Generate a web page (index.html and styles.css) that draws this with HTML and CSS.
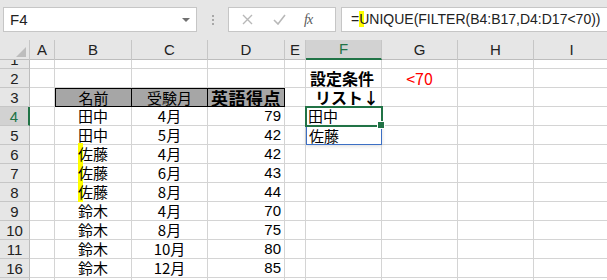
FILE: index.html
```html
<!DOCTYPE html>
<html lang="ja">
<head>
    <meta charset="UTF-8">
    <title>Sheet</title>
    <link rel="stylesheet" href="styles.css">
</head>
<body>
    <div class="fbar">
        <div class="namebox">
            <span>F4</span>
            <span class="drop"></span>
        </div>
        <div class="dots"><i></i><i></i><i></i></div>
        <div class="btns">
            <span class="icon">
                <svg width="11" height="11" viewBox="0 0 11 11"><path d="M1 1L10 10M10 1L1 10" stroke="#b8b8b8" stroke-width="1.4" fill="none"/></svg>
            </span>
            <span class="icon">
                <svg width="13" height="11" viewBox="0 0 13 11"><path d="M1 6L5 10L12 1" stroke="#b8b8b8" stroke-width="1.6" fill="none"/></svg>
            </span>
            <span class="icon fx">fx</span>
        </div>
        <div class="formula"><span>=</span><span class="hl">U</span><span>NIQUE(FILTER(B4:B17,D4:D17&lt;70))</span></div>
    </div>

    <div class="heads">
        <div class="corner"><span></span></div>
        <div class="ch">A</div>
        <div class="ch">B</div>
        <div class="ch">C</div>
        <div class="ch">D</div>
        <div class="ch">E</div>
        <div class="ch sel">F</div>
        <div class="ch">G</div>
        <div class="ch">H</div>
        <div class="ch">I</div>
    </div>

    <div class="sheet">
        <div class="grid">
            <div class="rh">1</div><div class="c"></div><div class="c"></div><div class="c"></div><div class="c"></div><div class="c"></div><div class="c"></div><div class="c"></div><div class="c"></div><div class="c"></div>

            <div class="rh">2</div><div class="c"></div><div class="c"></div><div class="c"></div><div class="c"></div><div class="c"></div><div class="c bold cond">設定条件</div><div class="c mid red">&lt;70</div><div class="c"></div><div class="c"></div>

            <div class="rh">3</div><div class="c"></div><div class="c th th-first">名前</div><div class="c th">受験月</div><div class="c th bold big">英語得点</div><div class="c"></div><div class="c bold list">リスト↓</div><div class="c"></div><div class="c"></div><div class="c"></div>

            <div class="rh cur">4</div><div class="c"></div><div class="c mid">田中</div><div class="c mid">4月</div><div class="c num">79</div><div class="c"></div><div class="c active">田中</div><div class="c"></div><div class="c"></div><div class="c"></div>

            <div class="rh">5</div><div class="c"></div><div class="c mid">田中</div><div class="c mid">5月</div><div class="c num">42</div><div class="c"></div><div class="c spill">佐藤</div><div class="c"></div><div class="c"></div><div class="c"></div>

            <div class="rh">6</div><div class="c"></div><div class="c mid"><span class="hl">佐</span>藤</div><div class="c mid">4月</div><div class="c num">42</div><div class="c"></div><div class="c"></div><div class="c"></div><div class="c"></div><div class="c"></div>

            <div class="rh">7</div><div class="c"></div><div class="c mid"><span class="hl">佐</span>藤</div><div class="c mid">6月</div><div class="c num">43</div><div class="c"></div><div class="c"></div><div class="c"></div><div class="c"></div><div class="c"></div>

            <div class="rh">8</div><div class="c"></div><div class="c mid"><span class="hl">佐</span>藤</div><div class="c mid">8月</div><div class="c num">44</div><div class="c"></div><div class="c"></div><div class="c"></div><div class="c"></div><div class="c"></div>

            <div class="rh">9</div><div class="c"></div><div class="c mid">鈴木</div><div class="c mid">4月</div><div class="c num">70</div><div class="c"></div><div class="c"></div><div class="c"></div><div class="c"></div><div class="c"></div>

            <div class="rh">10</div><div class="c"></div><div class="c mid">鈴木</div><div class="c mid">8月</div><div class="c num">75</div><div class="c"></div><div class="c"></div><div class="c"></div><div class="c"></div><div class="c"></div>

            <div class="rh">11</div><div class="c"></div><div class="c mid">鈴木</div><div class="c mid">10月</div><div class="c num">80</div><div class="c"></div><div class="c"></div><div class="c"></div><div class="c"></div><div class="c"></div>

            <div class="rh">16</div><div class="c"></div><div class="c mid">鈴木</div><div class="c mid">12月</div><div class="c num">85</div><div class="c"></div><div class="c"></div><div class="c"></div><div class="c"></div><div class="c"></div>

            <div class="rh"></div><div class="c"></div><div class="c"></div><div class="c"></div><div class="c"></div><div class="c"></div><div class="c"></div><div class="c"></div><div class="c"></div><div class="c"></div>
        </div>
    </div>
</body>
</html>
```

FILE: styles.css
```css
*{
    margin: 0;
    padding: 0;
    box-sizing: border-box;
}
body{
    width: 607px;
    height: 280px;
    overflow: hidden;
    background-color: white;
    font-family: "Liberation Sans", "Noto Sans CJK JP", sans-serif;
}

/* formula bar */
.fbar{
    height: 40px;
    background-color: #e6e6e6;
    display: flex;
    align-items: flex-start;
    padding: 7px 0 0 3px;
}
.namebox{
    width: 194px;
    height: 25px;
    background-color: white;
    border: 1px solid #c6c6c6;
    display: flex;
    align-items: center;
    justify-content: space-between;
    padding: 0 6px 0 6px;
    font-size: 15px;
    color: #222;
}
.drop{
    width: 0;
    height: 0;
    border-left: 4px solid transparent;
    border-right: 4px solid transparent;
    border-top: 4px solid #707070;
}
.dots{
    width: 31px;
    height: 25px;
    display: flex;
    flex-direction: column;
    align-items: center;
    justify-content: center;
    gap: 2px;
}
.dots i{
    width: 2px;
    height: 2px;
    background-color: #a8a8a8;
}
.btns{
    width: 108px;
    height: 25px;
    background-color: white;
    border: 1px solid #c6c6c6;
    display: flex;
    align-items: center;
    padding-left: 13px;
}
.icon{
    width: 36px;
    display: flex;
    align-items: center;
}
.fx{
    font-family: "Liberation Serif", serif;
    font-style: italic;
    font-size: 14px;
    color: #5a5a5a;
    letter-spacing: -1px;
}
.formula{
    flex: 1;
    height: 25px;
    margin-left: 5px;
    background-color: white;
    border: 1px solid #c6c6c6;
    border-right: none;
    padding-left: 9px;
    font-size: 14px;
    line-height: 23px;
    color: #222;
    white-space: nowrap;
    overflow: hidden;
}
.hl{
    background: linear-gradient(to right, #ffff00 5px, transparent 5px);
}

/* column headers */
.heads{
    display: grid;
    grid-template-columns: 30px 25px 77px 76px 77px 21px 76px 76px 76px 76px;
    height: 20px;
    background-color: #e6e6e6;
    border-bottom: 1px solid #bdbdbd;
}
.corner{
    border-right: 1px solid #c6c6c6;
    position: relative;
}
.corner span{
    position: absolute;
    right: 3px;
    bottom: 3px;
    width: 0;
    height: 0;
    border-left: 10px solid transparent;
    border-bottom: 10px solid #bdbdbd;
}
.ch{
    border-right: 1px solid #c6c6c6;
    text-align: center;
    font-size: 15px;
    line-height: 19px;
    color: #222;
}
.ch.sel{
    background-color: #d2d2d2;
    border-bottom: 2px solid #217346;
    color: #217346;
    line-height: 18px;
}

/* sheet */
.sheet{
    height: 220px;
    overflow: hidden;
}
.grid{
    display: grid;
    grid-template-columns: 30px 25px 77px 76px 77px 21px 76px 76px 76px 76px;
    grid-auto-rows: 19px;
    margin-top: -10px;
}
.rh{
    background-color: #e6e6e6;
    border-right: 1px solid #bdbdbd;
    border-bottom: 1px solid #c6c6c6;
    text-align: center;
    font-size: 15px;
    line-height: 19px;
    color: #222;
}
.rh.cur{
    background-color: #d2d2d2;
    border-right: 2px solid #217346;
    color: #217346;
}
.c{
    border-right: 1px solid #d4d4d4;
    border-bottom: 1px solid #d4d4d4;
    font-family: "Noto Sans CJK JP", "Liberation Sans", sans-serif;
    font-size: 15px;
    line-height: 18px;
    padding: 0 2px;
    color: black;
    white-space: nowrap;
}
.mid{
    text-align: center;
}
.num{
    text-align: right;
    padding-right: 3px;
    font-family: "Liberation Sans", sans-serif;
}
.bold{
    font-weight: bold;
}
.big{
    font-size: 17px;
    letter-spacing: 0.5px;
    padding: 0;
    text-align: center;
}
.red{
    color: #ff0000;
    font-size: 16px;
}
.cond{
    font-size: 16px;
    padding-left: 4px;
}
.list{
    font-size: 16px;
    padding-left: 9px;
}
.th{
    background-color: #a6a6a6;
    border-top: 1px solid black;
    border-right: 1px solid black;
    border-bottom: 1px solid black;
    text-align: center;
    line-height: 17px;
}
.th-first{
    border-left: 1px solid black;
}
.active{
    position: relative;
    outline: 2px solid #217346;
    outline-offset: -1px;
    z-index: 2;
}
.active::after{
    content: "";
    position: absolute;
    right: -4px;
    bottom: -4px;
    width: 6px;
    height: 6px;
    background-color: #217346;
    border: 1px solid white;
}
.spill{
    border: 1px solid #3c6fc4;
    box-shadow: 0 1px 4px rgba(0, 0, 0, 0.15);
}
```
